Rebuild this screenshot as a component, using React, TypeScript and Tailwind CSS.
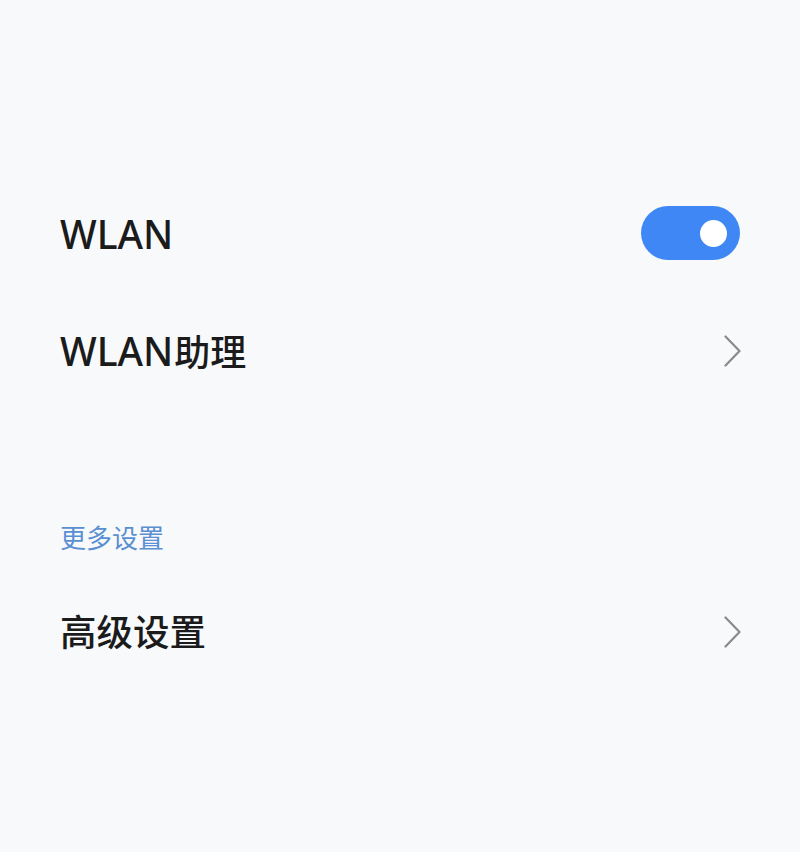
function Toggle({ on }: { on: boolean }) {
  return (
    <div className={`w-[99px] h-[54px] rounded-full flex items-center px-[13px] ${on ? 'bg-[#3f87f5] justify-end' : 'bg-[#d8d8d8] justify-start'}`}>
      <div className="w-[27px] h-[27px] rounded-full bg-white" />
    </div>
  )
}

function Chevron() {
  return (
    <svg width="17" height="32" viewBox="0 0 17 32" className="mr-[-1px]">
      <polyline points="1.5,1.5 15.5,16 1.5,30.5" fill="none" stroke="#8a8a8a" strokeWidth="2.2" strokeLinecap="round" strokeLinejoin="round" />
    </svg>
  )
}

function Row({ children, right }: { children: React.ReactNode; right: React.ReactNode }) {
  return (
    <div className="h-[118px] flex items-center justify-between pl-[60px] pr-[60px]">
      <span className="text-[#1b1b1b] leading-none font-medium flex items-baseline">{children}</span>
      {right}
    </div>
  )
}

// Latin runs are set a bit larger than CJK so both sit at the same visual size
const latin = 'text-[39px]'
const cjk = 'text-[36px] ml-[1px]'

export default function App() {
  return (
    <div className="w-[800px] h-[852px] bg-[#f8f9fb] pt-[174px]" style={{ fontFamily: '"Noto Sans", "Noto Sans CJK SC", sans-serif' }}>
      <Row right={<Toggle on />}>
        <span className={latin}>WLAN</span>
      </Row>
      <Row right={<Chevron />}>
        <span className={latin}>WLAN</span>
        <span className={cjk}>助理</span>
      </Row>

      <div className="mt-[108px] h-[40px] flex items-center pl-[60px]">
        <span className="text-[26px] text-[#5a8fd2] leading-none">更多设置</span>
      </div>

      <div className="mt-[15px]">
        <Row right={<Chevron />}>
          <span className="text-[36.5px]">高级设置</span>
        </Row>
      </div>
    </div>
  )
}
